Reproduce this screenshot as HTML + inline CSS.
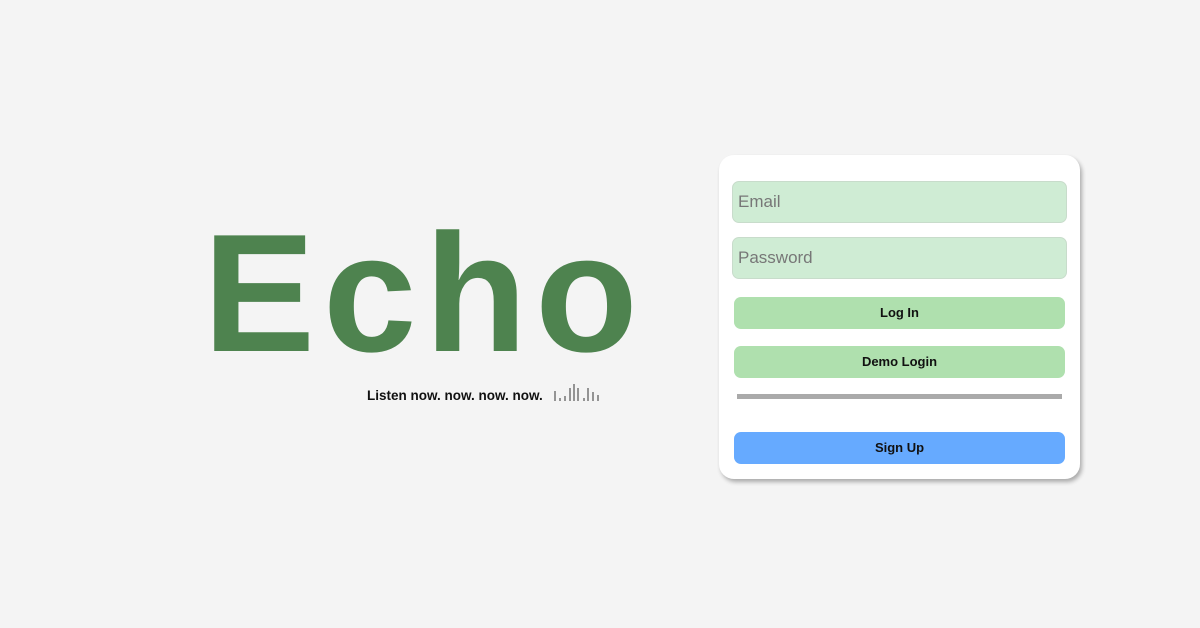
<!DOCTYPE html>
<html><head><style>
html,body{margin:0;padding:0;}
body{width:1200px;height:628px;background:#f4f4f4;position:relative;overflow:hidden;font-family:"Liberation Sans",Arial,sans-serif;}
.echo{position:absolute;left:203px;top:193px;font-size:168px;font-weight:bold;color:#4e834f;letter-spacing:8px;line-height:200px;white-space:nowrap;}
.tag{position:absolute;left:367px;top:388px;font-size:13.5px;font-weight:bold;color:#111;white-space:nowrap;}
.bars{position:absolute;left:553px;top:383px;}
.card{position:absolute;left:719px;top:155px;width:361px;height:324px;background:#fff;border-radius:15px;box-shadow:2px 3px 4px rgba(0,0,0,0.3);}
.inp{position:absolute;left:13px;background:#cfecd4;border:1px solid #c8dccb;border-radius:7px;font-size:17px;color:#777;line-height:40px;padding-left:5px;box-sizing:border-box;width:335px;height:42px;}
.btn{position:absolute;left:15px;width:331px;height:32px;border-radius:7px;font-size:13px;font-weight:bold;color:#111;text-align:center;line-height:32px;}
.g{background:#afe0ae;}
.b{background:#66aaff;}
.hr{position:absolute;left:18px;top:239px;width:325px;height:5px;background:#aaa;}
</style></head><body>
<div class="echo">Echo</div>
<div class="tag">Listen now. now. now. now.</div>
<svg class="bars" width="50" height="20" viewBox="0 0 50 20">
<g stroke="#555" stroke-width="1.2">
<line x1="2" y1="8" x2="2" y2="18"/>
<line x1="7" y1="15" x2="7" y2="18"/>
<line x1="12" y1="13" x2="12" y2="18"/>
<line x1="17" y1="5" x2="17" y2="18"/>
<line x1="21" y1="1" x2="21" y2="18"/>
<line x1="25" y1="5" x2="25" y2="18"/>
<line x1="31" y1="15" x2="31" y2="18"/>
<line x1="35" y1="5" x2="35" y2="18"/>
<line x1="40" y1="9" x2="40" y2="18"/>
<line x1="45" y1="12" x2="45" y2="18"/>
</g></svg>
<div class="card">
<div class="inp" style="top:26px">Email</div>
<div class="inp" style="top:82px">Password</div>
<div class="btn g" style="top:142px">Log In</div>
<div class="btn g" style="top:191px">Demo Login</div>
<div class="hr"></div>
<div class="btn b" style="top:277px">Sign Up</div>
</div>
</body></html>
